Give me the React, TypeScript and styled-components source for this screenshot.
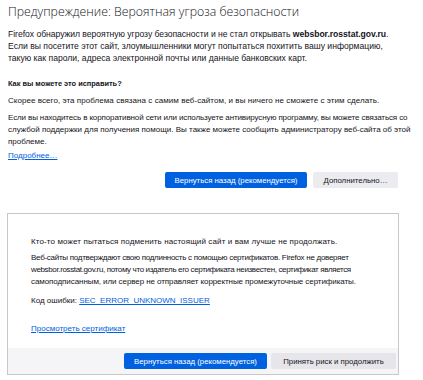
import React from "react";
import styled, { createGlobalStyle } from "styled-components";

const Global = createGlobalStyle`
  html, body { margin: 0; padding: 0; background: #fff; }
  body { font-family: "Liberation Sans", Arial, sans-serif; color: #15141a; }
  * { box-sizing: border-box; }
`;

const Page = styled.div`
  width: 423px;
  height: 380px;
  padding: 0 8px;
  overflow: hidden;
`;

const Title = styled.h1`
  margin: 0;
  padding-top: 2px;
  font-family: "Open Sans", sans-serif;
  font-weight: 300;
  font-size: 12.3px;
  line-height: 20px;
  white-space: nowrap;
  color: #15141a;
`;

const P = styled.p<{ $mt?: number; $size?: number }>`
  margin: ${(p) => p.$mt ?? 0}px 0 0;
  font-size: ${(p) => p.$size ?? 8}px;
  line-height: 12px;
  white-space: nowrap;
`;

const Line = styled.span<{ $ls?: number }>`
  display: block;
  letter-spacing: ${(p) => p.$ls ?? 0}px;
`;

const H2 = styled.h2`
  margin: 14px 0 0;
  font-size: 7.4px;
  line-height: 12px;
  font-weight: 700;
`;

const Link = styled.a`
  color: #0061e0;
  text-decoration: underline;
`;

const Actions = styled.div`
  display: flex;
  justify-content: flex-end;
  gap: 6px;
  width: 390px;
  margin-top: 10px;
`;

const Btn = styled.button<{ $primary?: boolean; $w: number; $bg?: string }>`
  width: ${(p) => p.$w}px;
  height: 16px;
  border: none;
  border-radius: 2px;
  padding: 0;
  font-family: "Liberation Sans", Arial, sans-serif;
  font-size: 7.8px;
  font-weight: 400;
  white-space: nowrap;
  color: ${(p) => (p.$primary ? "#fff" : "#15141a")};
  background: ${(p) => (p.$primary ? "#0061e0" : p.$bg ?? "#ececf0")};
`;

const Box = styled.div`
  margin: 25px 0 0 -1px;
  border: 1px solid #c8c8cc;
  width: 392px;
`;

const BoxBody = styled.div`
  padding: 22px 10px 13px 23px;
`;

const Footer = styled.div`
  background: #f5f5f7;
  height: 26px;
  display: flex;
  justify-content: flex-end;
  align-items: center;
  gap: 4px;
  padding-right: 2px;
`;

export default function App() {
  return (
    <Page>
      <Global />
      <Title>Предупреждение: Вероятная угроза безопасности</Title>
      <P $mt={6} $size={8.6}>
        <Line $ls={-0.03}>
          Firefox обнаружил вероятную угрозу безопасности и не стал открывать <b>websbor.rosstat.gov.ru</b>.
        </Line>
        <Line>Если вы посетите этот сайт, злоумышленники могут попытаться похитить вашу информацию,</Line>
        <Line>такую как пароли, адреса электронной почты или данные банковских карт.</Line>
      </P>
      <H2>Как вы можете это исправить?</H2>
      <P $mt={5}>
        <Line $ls={0.06}>Скорее всего, эта проблема связана с самим веб-сайтом, и вы ничего не сможете с этим сделать.</Line>
      </P>
      <P $mt={5}>
        <Line $ls={-0.12}>
          Если вы находитесь в корпоративной сети или используете антивирусную программу, вы можете связаться со
        </Line>
        <Line>службой поддержки для получения помощи. Вы также можете сообщить администратору веб-сайта об этой</Line>
        <Line>проблеме.</Line>
      </P>
      <P $mt={2}>
        <Link href="#">Подробнее…</Link>
      </P>
      <Actions>
        <Btn $primary $w={142}>Вернуться назад (рекомендуется)</Btn>
        <Btn $w={85}>Дополнительно…</Btn>
      </Actions>
      <Box>
        <BoxBody>
          <P>
            <Line $ls={0.12}>Кто-то может пытаться подменить настоящий сайт и вам лучше не продолжать.</Line>
          </P>
          <P $mt={4}>
            <Line $ls={-0.28}>Веб-сайты подтверждают свою подлинность с помощью сертификатов. Firefox не доверяет</Line>
            <Line $ls={-0.36}>
              websbor.rosstat.gov.ru, потому что издатель его сертификата неизвестен, сертификат является
            </Line>
            <Line $ls={-0.08}>самоподписанным, или сервер не отправляет корректные промежуточные сертификаты.</Line>
          </P>
          <P $mt={7}>
            Код ошибки: <Link href="#">SEC_ERROR_UNKNOWN_ISSUER</Link>
          </P>
          <P $mt={16}>
            <Link href="#">Просмотреть сертификат</Link>
          </P>
        </BoxBody>
        <Footer>
          <Btn $primary $w={143}>Вернуться назад (рекомендуется)</Btn>
          <Btn $w={125} $bg="#e6e6ea">Принять риск и продолжить</Btn>
        </Footer>
      </Box>
    </Page>
  );
}
